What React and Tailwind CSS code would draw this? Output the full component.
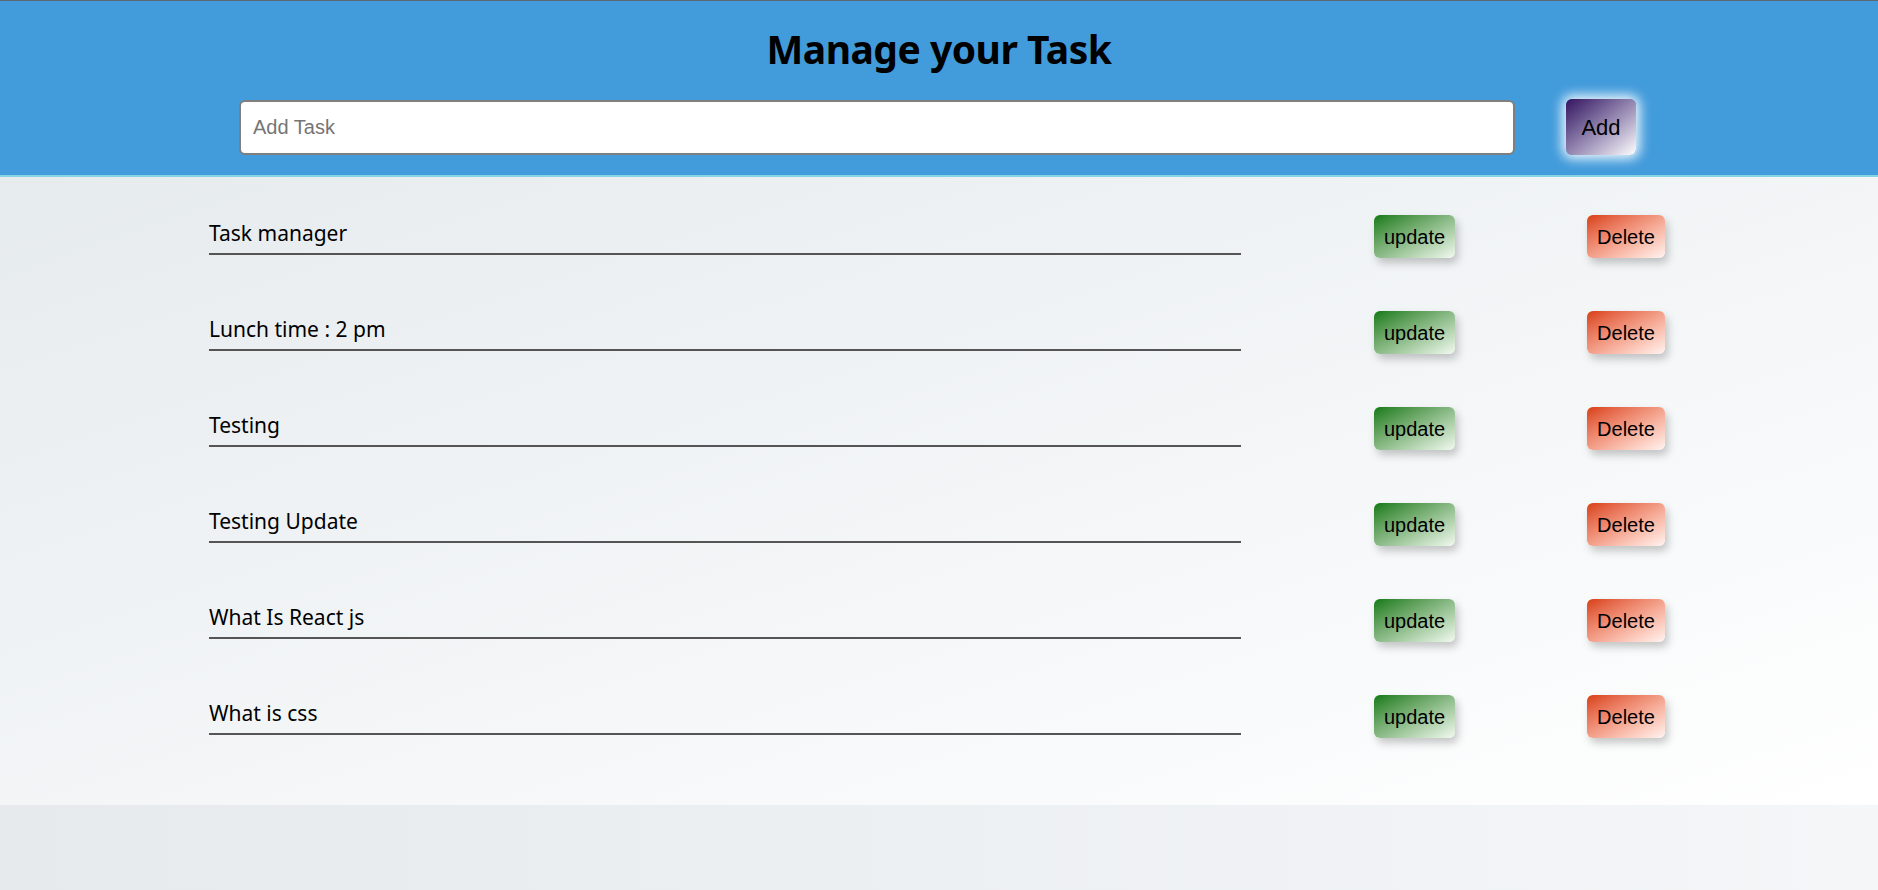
import React from "react";

const tasks = [
  "Task manager",
  "Lunch time : 2 pm",
  "Testing",
  "Testing Update",
  "What Is React js",
  "What is css",
];

export default function App() {
  return (
    <div className="min-h-[890px] bg-gradient-to-r from-[#e6eaed] to-[#f4f6f8]">
      <header className="border-t border-[#5c6670] bg-[#429bdb] border-b-2 border-b-[#86d3e6] pt-[23px] pb-[20px]">
        <h1 className="text-center font-['Noto_Sans',sans-serif] text-[39px] leading-[50px] tracking-[-0.5px] font-bold text-black">
          Manage your Task
        </h1>
        <div className="mt-[25px] pr-[3px] flex items-center justify-center gap-[51px] font-['Liberation_Sans',Arial,sans-serif]">
          <input
            type="text"
            placeholder="Add Task"
            className="w-[1276px] h-[55px] rounded-md border-2 border-[#7f7f7f] bg-white pl-3 text-[20px] text-black placeholder:text-[#757575] outline-none"
          />
          <button className="h-[56px] w-[70px] rounded-md bg-gradient-to-br from-[#36115f] to-[#ffffff] text-[22px] text-black shadow-[0_0_12px_4px_rgba(255,255,255,0.9)]">
            Add
          </button>
        </div>
      </header>

      <main className="bg-gradient-to-br from-[#e6ebee] to-[#ffffff] pt-[38px] pb-[67px] flex flex-col gap-[53px]">
        {tasks.map((t) => (
          <div key={t} className="flex items-start h-[43px]">
            <div className="ml-[209px] w-[1032px] border-b-2 border-[#555555] pt-[3px] pb-[5px] font-['Noto_Sans',sans-serif] text-[21px] leading-[30px] text-black">
              {t}
            </div>
            <button className="ml-[133px] h-[43px] w-[81px] rounded-md bg-gradient-to-br from-[#087a10] to-[#f2faf0] font-['Liberation_Sans',Arial,sans-serif] text-[20px] text-black shadow-[3px_5px_8px_rgba(0,0,0,0.22)]">
              update
            </button>
            <button className="ml-[132px] h-[43px] w-[78px] rounded-md bg-gradient-to-br from-[#d83c0c] to-[#fff4f0] font-['Liberation_Sans',Arial,sans-serif] text-[20px] text-black shadow-[3px_5px_8px_rgba(0,0,0,0.22)]">
              Delete
            </button>
          </div>
        ))}
      </main>
    </div>
  );
}
